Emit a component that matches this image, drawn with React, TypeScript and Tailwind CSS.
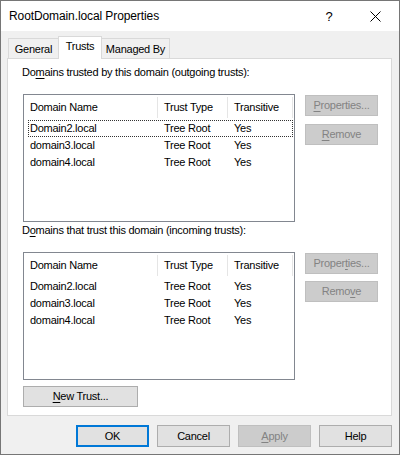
const rows = [
  { name: 'Domain2.local', type: 'Tree Root', transitive: 'Yes' },
  { name: 'domain3.local', type: 'Tree Root', transitive: 'Yes' },
  { name: 'domain4.local', type: 'Tree Root', transitive: 'Yes' },
];

function Mn({ children }: { children: string }) {
  return <span className="underline underline-offset-2 decoration-[1px]">{children}</span>;
}

function TrustList({ focused }: { focused?: boolean }) {
  return (
    <div className="w-[272px] h-[128px] border border-[#828790] bg-white">
      {/* header */}
      <div className="flex h-[25px] items-center">
        <div className="w-[134px] h-[21px] flex items-center pl-[6px] border-r border-[#e5e5e5]">Domain Name</div>
        <div className="w-[70px] h-[21px] flex items-center pl-[6px] border-r border-[#e5e5e5]">Trust Type</div>
        <div className="w-[65px] h-[21px] flex items-center pl-[6px] border-r border-[#e5e5e5]">Transitive</div>
      </div>
      <div className="pl-[4px] pr-[1px]">
        {rows.map((r, i) => (
          <div
            key={r.name}
            className={`flex h-[17px] items-center border border-dotted ${
              focused && i === 0 ? 'border-[#333]' : 'border-transparent'
            }`}
          >
            <div className="w-[129px] pl-[1px]">{r.name}</div>
            <div className="w-[70px] pl-[6px]">{r.type}</div>
            <div className="pl-[6px]">{r.transitive}</div>
          </div>
        ))}
      </div>
    </div>
  );
}

function DisabledButton({ children }: { children: React.ReactNode }) {
  return (
    <div className="w-[73px] h-[21px] flex items-center justify-center bg-[#cccccc] border border-[#bfbfbf] text-[#838383]">
      {children}
    </div>
  );
}

function Button({ children, primary, disabled }: { children: React.ReactNode; primary?: boolean; disabled?: boolean }) {
  return (
    <div
      className={`w-[73px] h-[22px] flex items-center justify-center ${
        disabled
          ? 'bg-[#cccccc] border border-[#bfbfbf] text-[#838383]'
          : primary
          ? 'bg-[#e1e1e1] border-2 border-[#0078d7]'
          : 'bg-[#e1e1e1] border border-[#adadad]'
      }`}
    >
      {children}
    </div>
  );
}

export default function App() {
  return (
    <div
      className="w-[400px] h-[455px] border border-[#767676] bg-[#f0f0f0] flex flex-col text-[11px] tracking-[-0.25px] text-black leading-none"
      style={{ fontFamily: '"Liberation Sans", Arial, sans-serif' }}
    >
      {/* title bar */}
      <div className="h-[30px] bg-white flex items-center shrink-0">
        <div className="pl-[8px] pb-[1px] text-[12px] tracking-[-0.1px] flex-1">RootDomain.local Properties</div>
        <div className="w-[46px] flex justify-center text-[13px]">?</div>
        <div className="w-[46px] h-[30px] flex items-center justify-center mr-[1px]">
          <svg width="11" height="11" viewBox="0 0 11 11" className="stroke-black">
            <path d="M0.5 0.5 L10.5 10.5 M10.5 0.5 L0.5 10.5" strokeWidth="1" fill="none" />
          </svg>
        </div>
      </div>

      {/* tabs */}
      <div className="pl-[6px] pr-[7px] pt-[5px]">
        <div className="flex items-end h-[22px] pl-[1px]">
          <div className="w-[50px] h-[20px] flex items-center justify-center pt-[1px] border border-b-0 border-r-0 border-[#d9d9d9] bg-[#f0f0f0]">General</div>
          <div className="w-[44px] h-[23px] -mb-px flex items-center justify-center pb-[3px] border border-b-0 border-[#d9d9d9] bg-white relative z-10">Trusts</div>
          <div className="w-[68px] h-[20px] flex items-center justify-center pt-[1px] border border-b-0 border-l-0 border-[#d9d9d9] bg-[#f0f0f0]">Managed By</div>
        </div>

        {/* panel */}
        <div className="h-[358px] border border-[#d9d9d9] bg-white pl-[14px]">
          <div className="pt-[8px] h-[19px]">
            Do<Mn>m</Mn>ains trusted by this domain (outgoing trusts):
          </div>
          <div className="flex gap-[10px] mt-[16px] pl-[1px]">
            <TrustList focused />
            <div className="flex flex-col gap-[8px] pt-[1px]">
              <DisabledButton>
                <Mn>P</Mn>roperties...
              </DisabledButton>
              <DisabledButton>
                <Mn>R</Mn>emove
              </DisabledButton>
            </div>
          </div>
          <div className="mt-[3px] h-[11px]">
            D<Mn>o</Mn>mains that trust this domain (incoming trusts):
          </div>
          <div className="flex gap-[10px] mt-[16px] pl-[1px]">
            <TrustList />
            <div className="flex flex-col gap-[7px] pt-[1px]">
              <DisabledButton>
                Proper<Mn>t</Mn>ies...
              </DisabledButton>
              <DisabledButton>
                Remo<Mn>v</Mn>e
              </DisabledButton>
            </div>
          </div>
          <div className="mt-[6px] pl-[1px]">
            <div className="w-[115px] h-[21px] flex items-center justify-center bg-[#e1e1e1] border border-[#adadad]">
              <span>
                <Mn>N</Mn>ew Trust...
              </span>
            </div>
          </div>
        </div>
      </div>

      {/* bottom buttons */}
      <div className="flex justify-end gap-[8px] pr-[7px] pt-[9px]">
        <Button primary>OK</Button>
        <Button>Cancel</Button>
        <Button disabled>
          <Mn>A</Mn>pply
        </Button>
        <Button>Help</Button>
      </div>
    </div>
  );
}
